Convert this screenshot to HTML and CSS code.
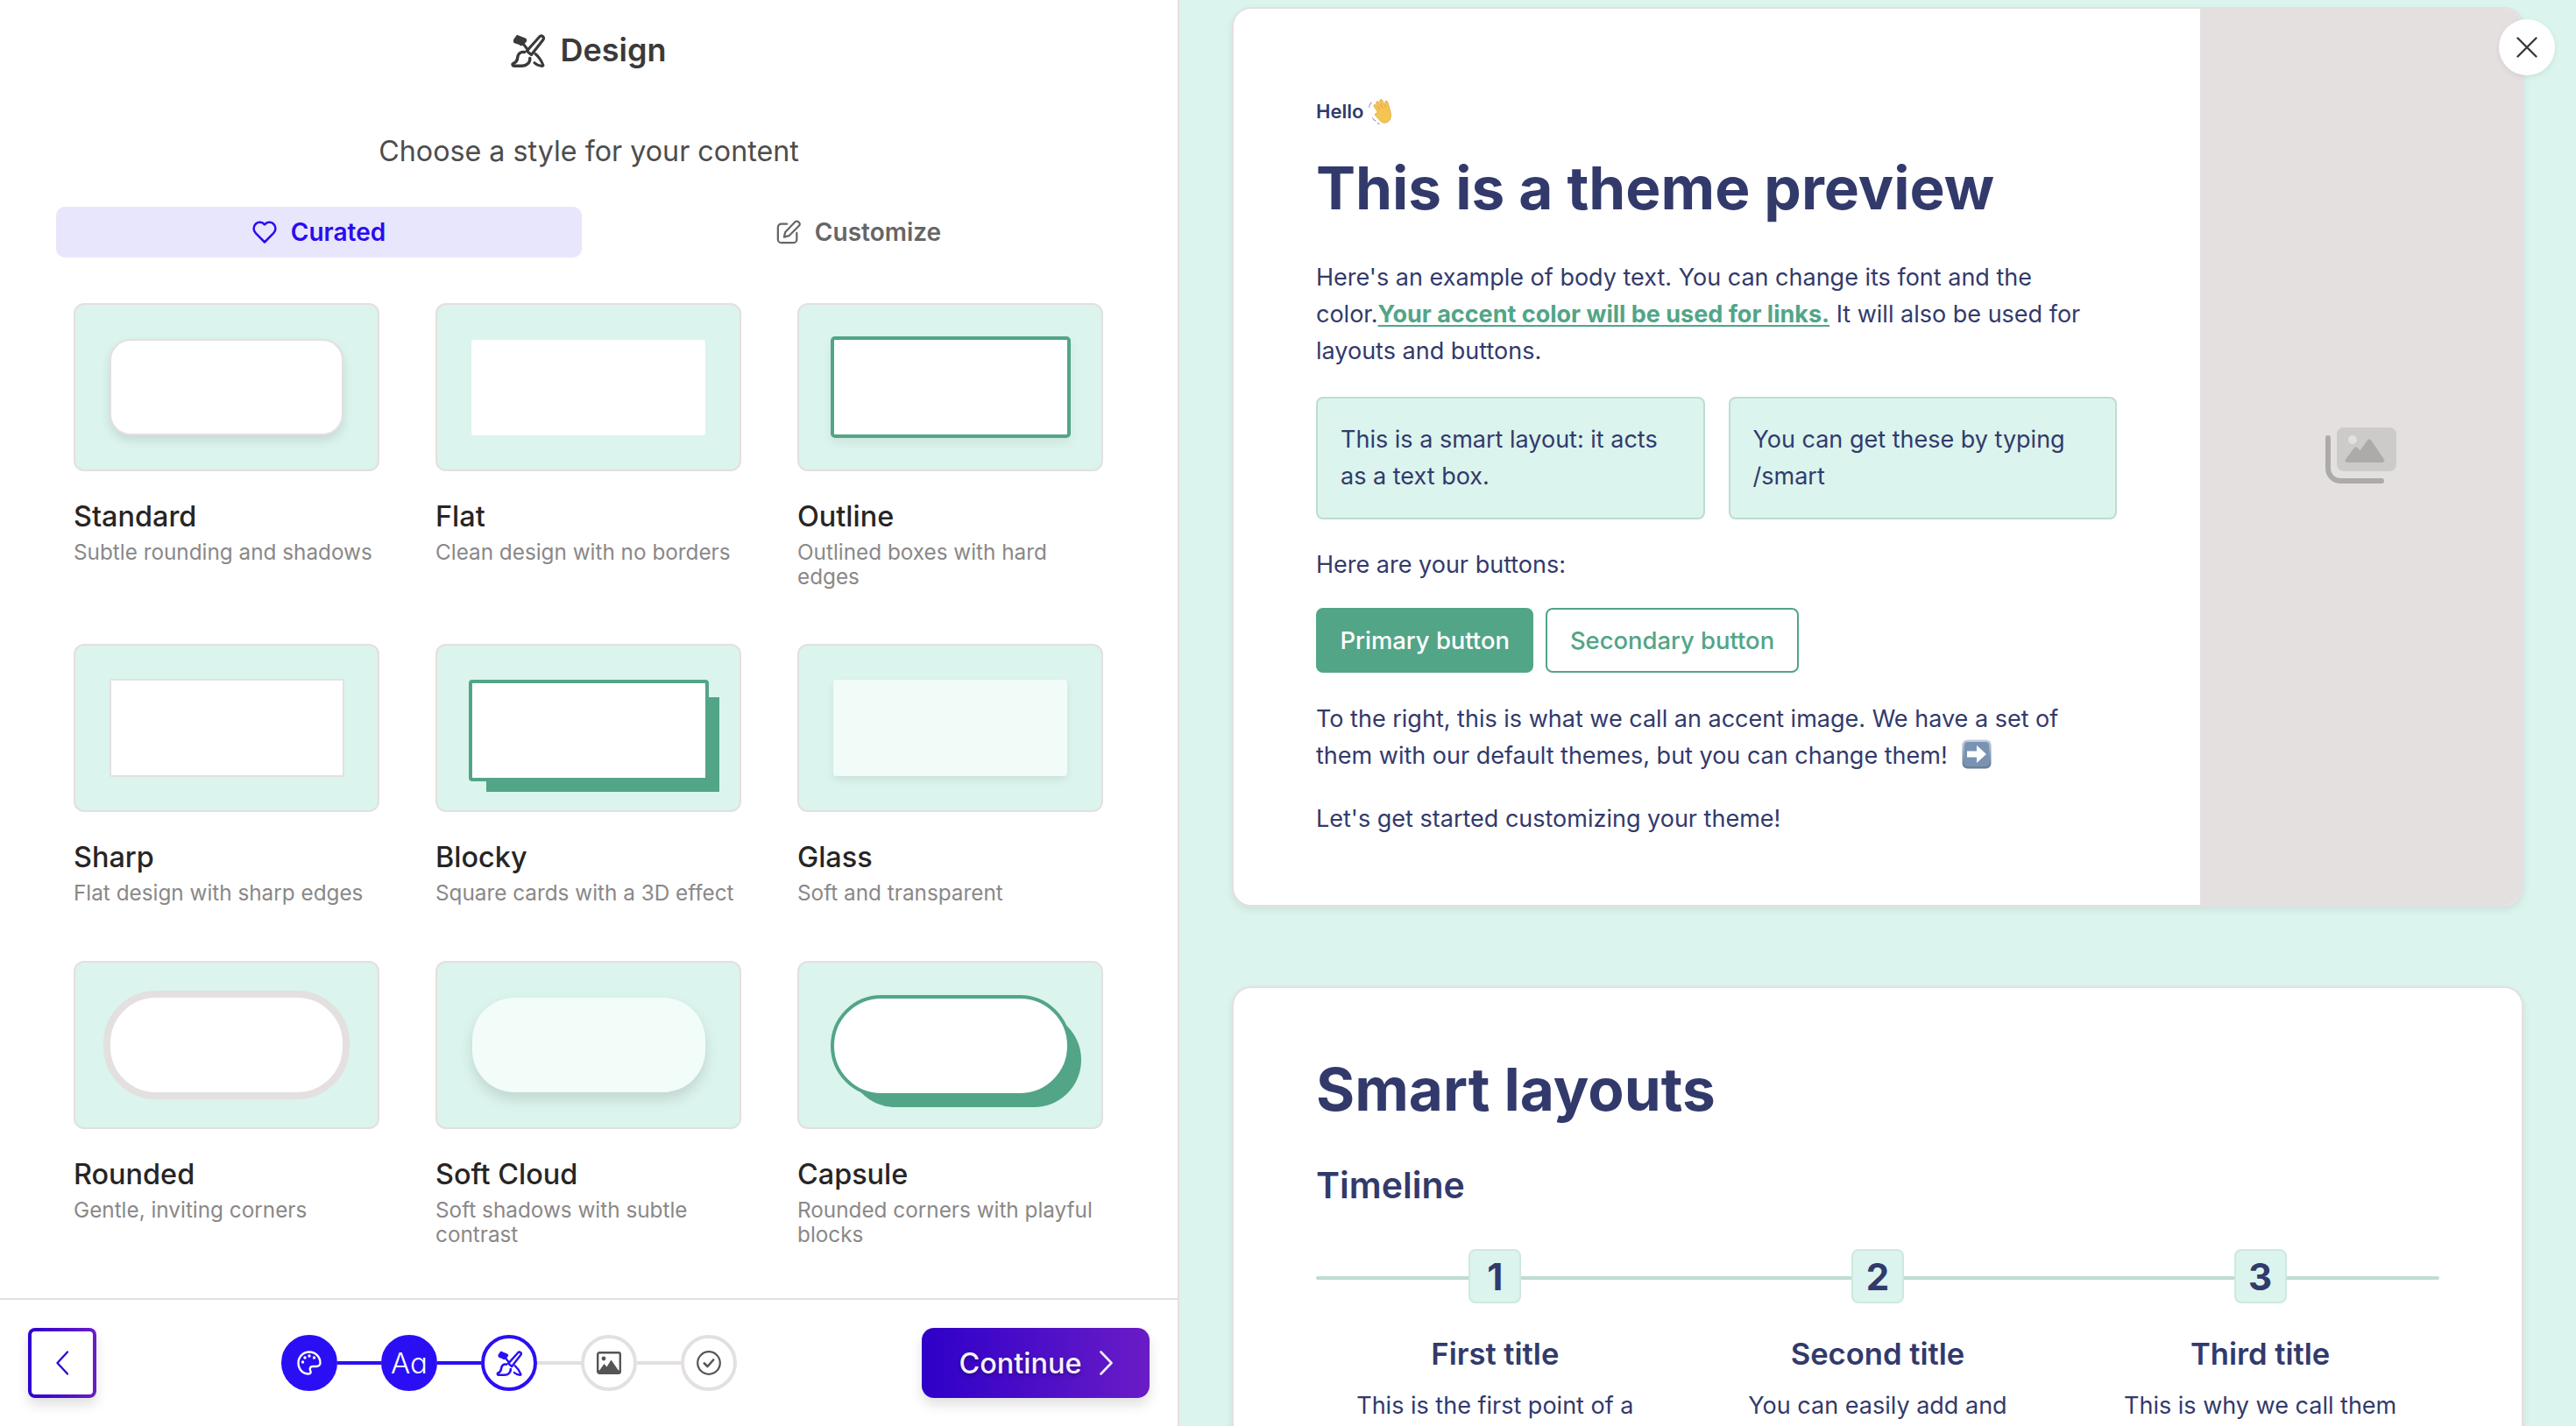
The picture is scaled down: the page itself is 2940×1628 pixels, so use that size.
FILE: index.html
```html
<!DOCTYPE html>
<html lang="en">
<head>
<meta charset="utf-8">
<title>Design</title>
<link rel="stylesheet" href="styles.css">
</head>
<body>
<svg class="defs" width="0" height="0" aria-hidden="true">
  <symbol id="brush" viewBox="0 0 40 38">
    <path d="M7 .8 16.5 4.6c2 .9 2.400 3 1 4.400L14.200 12.300c-1.400 1.400-3.400 1.300-4.600-.2L4.800 10.500C2.600 9.700 2.400 7.400 3.500 5.400Z" fill="currentColor"/>
    <path d="M14.500 11.500 19.500 18" fill="none" stroke="currentColor" stroke-width="3" stroke-linecap="round"/>
    <path d="M32.500 3.200c1.400-1.500 3-1.500 4.100-.5 1.100 1 1.100 2.500 0 4L23.500 23.500l-5.300-4.300Z" fill="none" stroke="currentColor" stroke-width="3.200" stroke-linejoin="round"/>
    <path d="M15.500 20.500c-4.500-.8-7.500 2-7.800 6-.2 3.500-1.700 5.700-5 7-1.200.6-.8 2.800.8 2.800h9c5.500 0 9.500-3.600 9.300-8.800" fill="none" stroke="currentColor" stroke-width="3.400" stroke-linecap="round" stroke-linejoin="round"/>
    <path d="M28 22.500c3.500 3 6.700 7.500 8.800 12.500.4 1-.2 1.600-1.100 1.400-3.400-.5-6.900-1.900-8.700-3.700" fill="none" stroke="currentColor" stroke-width="3" stroke-linecap="round" stroke-linejoin="round"/>
  </symbol>
</svg>

<div class="app">
  <aside class="panel">
    <header class="head">
      <svg class="head-icon"><use href="#brush"/></svg>
      <span>Design</span>
    </header>
    <p class="subtitle">Choose a style for your content</p>

    <div class="tabs">
      <button class="tab tab-active">
        <svg class="tab-icon" viewBox="0 0 28 26" fill="none" stroke="currentColor" stroke-width="2.500" stroke-linejoin="round"><path d="M14 24.500 3.800 14.200C.8 11.200.9 6.300 4 3.500 6.900.9 11.200 1.400 13.900 4.300l.1.100.1-.1c2.700-2.900 7-3.400 9.900-.8 3.100 2.800 3.200 7.700.2 10.700Z"/></svg>
        Curated
      </button>
      <button class="tab">
        <svg class="tab-icon tab-icon-edit" viewBox="0 0 30 30" fill="none" stroke="currentColor" stroke-width="2.400" stroke-linecap="round" stroke-linejoin="round"><path d="M13 5H6a4 4 0 0 0-4 4v15a4 4 0 0 0 4 4h15a4 4 0 0 0 4-4v-8"/><path d="M23 2.500a2.800 2.800 0 0 1 4 0l.8.8a2.800 2.800 0 0 1 0 4L15.500 19.500l-6 1.500 1.500-6Z"/></svg>
        Customize
      </button>
    </div>

    <div class="grid">
      <article class="style">
        <div class="thumb"><div class="sample s-standard"></div></div>
        <h3>Standard</h3>
        <p>Subtle rounding and shadows</p>
      </article>
      <article class="style">
        <div class="thumb"><div class="sample s-flat"></div></div>
        <h3>Flat</h3>
        <p>Clean design with no borders</p>
      </article>
      <article class="style">
        <div class="thumb"><div class="sample s-outline"></div></div>
        <h3>Outline</h3>
        <p>Outlined boxes with hard edges</p>
      </article>
      <article class="style">
        <div class="thumb"><div class="sample s-sharp"></div></div>
        <h3>Sharp</h3>
        <p>Flat design with sharp edges</p>
      </article>
      <article class="style">
        <div class="thumb"><div class="sample s-blocky"></div></div>
        <h3>Blocky</h3>
        <p>Square cards with a 3D effect</p>
      </article>
      <article class="style">
        <div class="thumb"><div class="sample s-glass"></div></div>
        <h3>Glass</h3>
        <p>Soft and transparent</p>
      </article>
      <article class="style">
        <div class="thumb"><div class="sample s-rounded"></div></div>
        <h3>Rounded</h3>
        <p>Gentle, inviting corners</p>
      </article>
      <article class="style">
        <div class="thumb"><div class="sample s-cloud"></div></div>
        <h3>Soft Cloud</h3>
        <p>Soft shadows with subtle contrast</p>
      </article>
      <article class="style">
        <div class="thumb"><div class="sample s-capsule"></div></div>
        <h3>Capsule</h3>
        <p>Rounded corners with playful blocks</p>
      </article>
    </div>

    <footer class="foot">
      <button class="back" aria-label="Back">
        <span class="back-inner">
          <svg width="14" height="28" viewBox="0 0 14 28" fill="none" stroke="#2c0fd0" stroke-width="2.400" stroke-linecap="round" stroke-linejoin="round"><path d="M13 1.500 1.500 14 13 26.500"/></svg>
        </span>
      </button>
      <div class="stepper">
        <span class="step step-done">
          <svg width="28" height="28" viewBox="0 0 28 28" fill="none" stroke="#fff" stroke-width="2.400"><path d="M14 1.500C7 1.500 1.500 7 1.500 14c0 7 5 12.500 11.500 12.500 2.500 0 3.200-1.800 2.200-3.800-1.200-2.400.1-4.700 2.600-4.700H22c2.600 0 4.500-1.700 4.500-4C26.500 7 21 1.500 14 1.500Z" stroke-linejoin="round"/><g fill="#fff" stroke="none"><circle cx="6.500" cy="13" r="1.700"/><circle cx="9" cy="8" r="1.700"/><circle cx="14" cy="6" r="1.700"/><circle cx="19.500" cy="8" r="1.700"/></g></svg>
        </span>
        <span class="link link-on"></span>
        <span class="step step-done step-text">Aa</span>
        <span class="link link-on"></span>
        <span class="step step-current"><svg class="step-brush"><use href="#brush"/></svg></span>
        <span class="link"></span>
        <span class="step">
          <svg width="28" height="26" viewBox="0 0 28 26"><rect x="1.200" y="1.200" width="25.600" height="23.600" rx="2" fill="none" stroke="#555" stroke-width="2.400"/><circle cx="8" cy="8" r="2.400" fill="#555"/><path d="M2.500 22.500 8.500 14l3 3.500 5-8 9 13Z" fill="#555"/><rect x="1.500" y="21.500" width="25" height="3.500" fill="#555"/></svg>
        </span>
        <span class="link"></span>
        <span class="step">
          <svg width="28" height="28" viewBox="0 0 28 28" fill="none" stroke="#555" stroke-width="2.200" stroke-linecap="round" stroke-linejoin="round"><circle cx="14" cy="14" r="12.800"/><path d="m8.800 14.500 3.700 3.500 6.700-7.500" stroke-width="2.600"/></svg>
        </span>
      </div>
      <button class="continue">
        <span>Continue</span>
        <svg width="15" height="28" viewBox="0 0 15 28" fill="none" stroke="#f3eefc" stroke-width="2.600" stroke-linecap="round" stroke-linejoin="round"><path d="M1.500 1.500 13.500 14 1.500 26.500"/></svg>
      </button>
    </footer>
  </aside>

  <main class="preview">
    <section class="card card-hero">
      <div class="hero-text">
        <div class="hello">Hello
          <svg class="wave" viewBox="0 0 28 30"><path d="M3 4C1.500 5 1 6 1 8M5 2.500C3.800 3 3.300 3.500 3 4.500M2 20c.5 2 1.500 3.500 3 4.500M6 27c1 1 2 1.500 3 1.500" fill="none" stroke="#8d93b5" stroke-width="1"/><path d="M9 14 6.500 8c-.8-2 1.800-3 2.800-1.100L12 12 9.800 5c-.6-2 2.200-2.900 3-.9l2.700 7L14.200 3.500c-.3-2.100 2.600-2.600 3.100-.5l2.100 8.500.4-5.500c.2-2 3-1.800 3 .2l.7 9.300c.5 5.500-.5 9-2.500 11-3 3-8 3-10.500-.5L6 18.500c-1.300-1.700.8-3.400 2.300-2Z" fill="#f5c453" stroke="#e0a336" stroke-width=".7"/></svg>
        </div>
        <h1>This is a theme preview</h1>
        <p class="body-text intro">Here's an example of body text. You can change its font and the color.<a href="#">Your accent color will be used for links.</a> It will also be used for layouts and buttons.</p>
        <div class="smart-row">
          <div class="smart-box">This is a smart layout: it acts as a text box.</div>
          <div class="smart-box">You can get these by typing /smart</div>
        </div>
        <p class="body-text buttons-label">Here are your buttons:</p>
        <div class="btn-row">
          <button class="btn btn-primary">Primary button</button>
          <button class="btn btn-secondary">Secondary button</button>
        </div>
        <p class="body-text right-note">To the right, this is what we call an accent image. We have a set of them with our default themes, but you can change them!
          <svg class="arrow-emoji" viewBox="0 0 34 34"><defs><linearGradient id="arrowbg" x1="0" y1="0" x2="0" y2="1"><stop offset="0" stop-color="#c3d0e0"/><stop offset=".5" stop-color="#8a9fba"/><stop offset="1" stop-color="#667b97"/></linearGradient></defs><rect x=".5" y=".5" width="33" height="33" rx="6" fill="url(#arrowbg)"/><rect x="3" y="3" width="28" height="28" rx="4" fill="#7a93b3"/><path d="M6 13.500h11V7l11 10-11 10v-6.500H6Z" fill="#fff"/></svg>
        </p>
        <p class="body-text closing">Let's get started customizing your theme!</p>
      </div>
      <div class="hero-image">
        <svg width="84" height="66" viewBox="0 0 84 66"><rect x="14" y="0" width="68" height="50" rx="8" fill="#cdcaca"/><circle cx="32" cy="14" r="5" fill="#e3e0df"/><path d="M26 40c-2 0-3-2-2-3.500L34 23c1-1 2.500-1 3.500 0l3 3.500L49 14.500c1-1.300 3-1.300 4 0l15 22c1 1.500 0 3.500-2 3.500Z" fill="#adaaaa"/><path d="M4 12v34c0 9 6 15 15 15h46" fill="none" stroke="#adaaaa" stroke-width="6" stroke-linecap="round"/></svg>
      </div>
    </section>

    <section class="card card-smart">
      <h1>Smart layouts</h1>
      <h2>Timeline</h2>
      <div class="timeline">
        <div class="tl-col">
          <div class="tl-num">1</div>
          <h3>First title</h3>
          <p>This is the first point of a</p>
        </div>
        <div class="tl-col">
          <div class="tl-num">2</div>
          <h3>Second title</h3>
          <p>You can easily add and</p>
        </div>
        <div class="tl-col">
          <div class="tl-num">3</div>
          <h3>Third title</h3>
          <p>This is why we call them</p>
        </div>
      </div>
    </section>

    <button class="close" aria-label="Close">
      <svg width="24" height="24" viewBox="0 0 24 24" fill="none" stroke="#3a3a3a" stroke-width="2.400" stroke-linecap="round"><path d="M1.500 1.500l21 21M22.500 1.500l-21 21"/></svg>
    </button>
  </main>
</div>
</body>
</html>
```

FILE: styles.css
```css
* { box-sizing: border-box; }
html, body { margin: 0; height: 100%; overflow: hidden; }
body { font-family: Inter, "Liberation Sans", sans-serif; background: #fff; color: #333; }
button { font-family: inherit; cursor: pointer; }
h1, h2, h3, p { margin: 0; }
.defs { position: absolute; }

.app { display: flex; height: 1628px; }

/* Left panel */
.panel {
  width: 1346px;
  flex: none;
  height: 100%;
  display: flex;
  flex-direction: column;
  background: #fff;
  border-right: 2px solid #e3e0df;
}
.head {
  height: 114px;
  display: flex;
  align-items: center;
  justify-content: center;
  gap: 16px;
  font-size: 36px;
  font-weight: 600;
  color: #3a3a3a;
}
.head-icon { width: 40px; height: 38px; margin-top: 2px; }
.subtitle {
  text-align: center;
  font-size: 32.250px;
  line-height: 44px;
  color: #4d4d4d;
  margin-top: 37px;
}
.tabs {
  display: grid;
  grid-template-columns: 600px 600px;
  gap: 16px;
  padding: 0 64px;
  margin-top: 41px;
}
.tab {
  height: 58px;
  display: flex;
  align-items: center;
  justify-content: center;
  gap: 16px;
  border: 0;
  border-radius: 10px;
  background: transparent;
  color: #666;
  font-size: 28px;
  font-weight: 600;
}
.tab-active { background: #e8e6fc; color: #2a0cf0; }
.tab-icon { width: 28px; height: 26px; }
.tab-icon-edit { height: 28px; }

.grid {
  display: grid;
  grid-template-columns: repeat(3, 349px);
  grid-template-rows: 325px 298px auto;
  column-gap: 64px;
  row-gap: 64px;
  padding-left: 84px;
  margin-top: 52px;
}
.thumb {
  height: 192px;
  display: flex;
  align-items: center;
  justify-content: center;
  background: #dbf4ed;
  border: 2px solid #e3e0df;
  border-radius: 12px;
}
.style h3 {
  font-size: 32.400px;
  line-height: 40px;
  font-weight: 500;
  color: #272525;
  margin-top: 32px;
}
.style p {
  font-size: 24.300px;
  line-height: 28px;
  color: #8a8888;
  margin-top: 6px;
}
.sample { background: #fff; flex: none; }
.s-standard { width: 267px; height: 110px; border: 2px solid #e3e0df; border-radius: 24px; box-shadow: 0 6px 12px rgba(0,0,0,.1); }
.s-flat { width: 267px; height: 109px; border-radius: 3px; }
.s-outline { width: 274px; height: 116px; border: 4px solid #52a587; border-radius: 5px; box-shadow: 0 6px 12px rgba(0,0,0,.06); }
.s-sharp { width: 268px; height: 112px; border: 2px solid #e3e0df; border-radius: 2px; }
.s-blocky { width: 274px; height: 116px; border: 4px solid #52a587; border-radius: 4px; box-shadow: 16px 16px 0 -4px #52a587; margin-top: 6px; }
.s-glass { width: 267px; height: 110px; background: #f1fbf8; border-radius: 3px; box-shadow: 0 4px 10px rgba(0,0,0,.08); }
.s-rounded { width: 281px; height: 124px; border: 8px solid #e3e0df; border-radius: 60px; }
.s-cloud { width: 266px; height: 108px; background: #f2fcf9; border-radius: 48px; box-shadow: 0 8px 16px rgba(0,0,0,.12); }
.s-capsule { width: 274px; height: 116px; border: 4px solid #52a587; border-radius: 58px; box-shadow: 16px 16px 0 -4px #52a587; margin-top: 2px; }

.foot {
  margin-top: auto;
  height: 146px;
  flex: none;
  border-top: 2px solid #e3e0df;
  display: flex;
  align-items: center;
  justify-content: space-between;
  padding: 0 32px;
}
.back {
  width: 78px;
  height: 80px;
  padding: 4px;
  border: 0;
  border-radius: 8px;
  background: linear-gradient(90deg, #2e00d0, #6a1cc6);
  box-shadow: 0 8px 14px rgba(0,0,0,.12);
}
.back-inner {
  width: 100%;
  height: 100%;
  display: flex;
  align-items: center;
  justify-content: center;
  background: #fff;
  border-radius: 4px;
}
.stepper { display: flex; align-items: center; }
.step {
  width: 64px;
  height: 64px;
  flex: none;
  display: flex;
  align-items: center;
  justify-content: center;
  background: #fff;
  border: 4px solid #e3e0df;
  border-radius: 50%;
}
.step-done { background: #2a0ff5; border-color: #2a0ff5; }
.step-current { border-color: #2a0ff5; color: #2a0ff5; }
.step-text { color: #fff; font-size: 33px; font-weight: 300; font-feature-settings: "cv11"; }
.step-brush { width: 31px; height: 29px; }
.link { width: 50px; height: 4px; background: #e3e0df; flex: none; }
.link-on { background: #2a0ff5; }
.continue {
  width: 260px;
  height: 80px;
  display: flex;
  align-items: center;
  justify-content: center;
  gap: 20px;
  border: 0;
  border-radius: 14px;
  background: linear-gradient(90deg, #2e00c9, #6a1cc6);
  color: #f6f2fd;
  font-size: 32.400px;
  font-weight: 500;
  box-shadow: 0 8px 14px rgba(0,0,0,.12);
}
.continue span { text-shadow: 0 2px 4px rgba(0,0,0,.35); }

/* Right preview */
.preview {
  flex: 1;
  min-width: 0;
  height: 100%;
  position: relative;
  overflow: hidden;
  background: #dbf4ed;
  padding: 8px 60px 0;
  color: #323a6c;
}
.card {
  background: #fff;
  border: 2px solid #e3e0df;
  border-radius: 22px;
  box-shadow: 0 4px 10px rgba(0,0,0,.07);
}
.card-hero { display: flex; height: 1027px; overflow: hidden; }
.hero-text { width: 1103px; flex: none; padding: 101px 0 0 94px; }
.hero-image {
  flex: 1;
  display: flex;
  align-items: center;
  justify-content: center;
  background: #e3e0df;
  padding-bottom: 2px;
}
.hello {
  display: flex;
  align-items: center;
  gap: 7px;
  height: 32px;
  font-size: 22px;
  font-weight: 600;
}
.wave { width: 28px; height: 30px; transform: rotate(-12deg); }
.hero-text h1, .card-smart h1 {
  font-size: 67.500px;
  line-height: 84px;
  font-weight: 700;
}
.hero-text h1 { margin-top: 30px; width: 900px; }
.body-text {
  font-size: 27px;
  line-height: 42px;
  width: 900px;
}
.intro { margin-top: 39px; }
.body-text a { color: #52a587; font-weight: 700; text-decoration: underline; text-underline-offset: 3px; }
.smart-row { display: flex; gap: 27px; width: 914px; margin-top: 31px; }
.smart-box {
  flex: 1;
  height: 140px;
  padding: 26px 26px;
  font-size: 27px;
  line-height: 42px;
  background: #dbf4ed;
  border: 2px solid #bfdcd0;
  border-radius: 8px;
}
.buttons-label { margin-top: 31px; }
.btn-row { display: flex; gap: 14px; margin-top: 28px; }
.btn {
  height: 74px;
  padding: 0 25.500px;
  border-radius: 8px;
  font-size: 27.400px;
  font-weight: 500;
  border: 2px solid #52a587;
}
.btn-primary { background: #52a587; color: #fff; }
.btn-secondary { background: #fff; color: #52a587; }
.right-note { margin-top: 32px; }
.arrow-emoji { width: 34px; height: 34px; vertical-align: -6px; margin-left: 9px; }
.closing { margin-top: 30px; }

.card-smart { margin-top: 91px; padding: 74px 94px 0; height: 900px; }
.card-smart h2 { font-size: 41px; line-height: 52px; font-weight: 600; margin-top: 41px; }
.timeline {
  display: grid;
  grid-template-columns: repeat(3, 1fr);
  gap: 28px;
  margin-top: 47px;
  position: relative;
}
.timeline::before {
  content: "";
  position: absolute;
  left: 0;
  right: 0;
  top: 31px;
  height: 4px;
  border-radius: 2px;
  background: #bfdcd0;
}
.tl-col { display: flex; flex-direction: column; align-items: center; text-align: center; position: relative; }
.tl-num {
  width: 60px;
  height: 62px;
  display: flex;
  align-items: center;
  justify-content: center;
  background: #dbf4ed;
  border: 2px solid #cfe8df;
  border-radius: 8px;
  font-size: 42px;
  font-weight: 700;
}
.tl-col h3 { font-size: 34.600px; line-height: 44px; font-weight: 600; margin-top: 35px; }
.tl-col p { font-size: 27px; line-height: 42px; margin-top: 17px; }

.close {
  position: absolute;
  top: 22px;
  left: 1506px;
  width: 64px;
  height: 64px;
  display: flex;
  align-items: center;
  justify-content: center;
  border: 0;
  border-radius: 50%;
  background: #fff;
  box-shadow: 0 2px 6px rgba(0,0,0,.08);
}
```
